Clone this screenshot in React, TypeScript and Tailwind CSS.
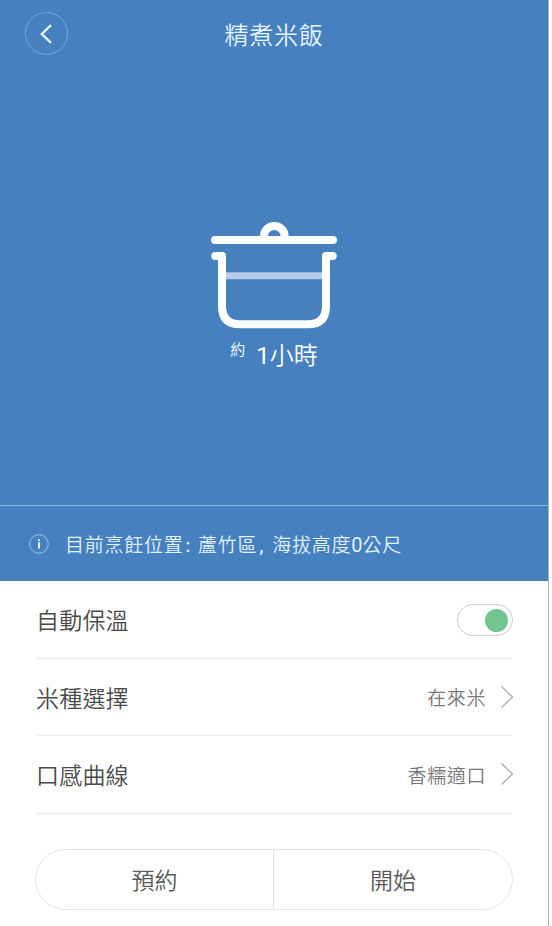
import React from "react";

function Chevron() {
  return (
    <svg className="-mr-[2px] ml-[14px] h-6 w-[14px]" viewBox="0 0 14 24" fill="none" stroke="#aaaaaa" strokeWidth="1.3">
      <path d="M1.500 1.500 L12.500 12 L1.500 22.500" />
    </svg>
  );
}

function Pot() {
  return (
    <svg className="h-[108px] w-[126px] shrink-0" viewBox="211 221 126 108" fill="none" stroke="#ffffff">
      <path d="M226 275.800H322" stroke="#b5cde9" strokeWidth="7" />
      <path d="M215 240H333" strokeWidth="8" strokeLinecap="round" />
      <path d="M264 238V236.200A10.300 10.300 0 0 1 284.600 236.200V238" strokeWidth="8" />
      <path
        d="M215.300 256H222V306Q222 324.300 240 324.300H308Q326 324.300 326 306V256H332.700"
        strokeWidth="8"
        strokeLinecap="round"
        strokeLinejoin="round"
      />
    </svg>
  );
}

function Row({ label, children }: { label: string; children: React.ReactNode }) {
  return (
    <div className="flex h-[77.5px] items-center justify-between border-b border-[#ececec] text-[#4b4b4b]">
      <span className="-ml-px pt-[6px] text-[23px] leading-8 tracking-[0.2px]">{label}</span>
      <div className="flex items-center text-[19px] tracking-[0.6px] text-[#777777]">{children}</div>
    </div>
  );
}

function Value({ text }: { text: string }) {
  return (
    <>
      <span className="pt-[5px] leading-7">{text}</span>
      <Chevron />
    </>
  );
}

export default function App() {
  return (
    <div className="h-[926px] w-[552px] overflow-hidden bg-white font-['Roboto','Noto_Sans_CJK_TC',sans-serif] font-[350]">
      <div className="flex h-full w-[549px] flex-col border-r border-[#b5b5b5] bg-white">
        <div className="flex h-[505px] flex-col bg-[#4680bf] text-white">
          <header className="grid h-[67px] grid-cols-[68px_1fr_68px] items-center">
            <button className="ml-[25px] flex h-[43px] w-[43px] items-center justify-center rounded-full border border-[#78a6da]">
              <svg className="mr-[2px] h-5 w-3" viewBox="0 0 12 20" fill="none" stroke="#e8faff" strokeWidth="2.3">
                <path d="M11 1.200 L1.800 10 L11 18.800" />
              </svg>
            </button>
            <h1 className="pt-[5px] text-center text-[24px] leading-8 font-[350] tracking-[0.8px] text-[#e6f5ff]">精煮米飯</h1>
          </header>
          <div className="flex flex-col items-center pt-[154px]">
            <Pot />
            <div className="mt-[11px] flex h-8 items-baseline leading-8">
              <span className="-translate-y-[9px] text-[15px] leading-[22px]">約</span>
              <span className="ml-[11px] font-['Roboto'] text-[24px] font-normal leading-8">1</span>
              <span className="text-[24px]">小時</span>
            </div>
          </div>
        </div>
        <div className="flex h-[76px] items-center border-t border-[#8db7e5] bg-[#4680bf] pl-[29px] text-[#e0f3ff]">
          <svg className="h-5 w-5" viewBox="0 0 20 20" fill="none">
            <circle cx="10" cy="10" r="9.3" stroke="#9fc3ea" />
            <path d="M10 8.200V14.500M10 5.200V7" stroke="#ffffff" strokeWidth="1.8" />
          </svg>
          <p className="ml-[16px] flex items-baseline pt-[4px] text-[19px] leading-7 tracking-[0.750px]">
            <span>目前烹飪位置</span>
            <span className="w-[14.500px] pl-[2px] font-medium">:</span>
            <span>蘆竹區</span>
            <span className="w-[15px] pl-[2px] font-medium">,</span>
            <span>海拔高度</span>
            <span className="text-[20px] font-normal tracking-normal">0</span>
            <span>公尺</span>
          </p>
        </div>
        <main className="pl-[37px] pr-[36px]">
          <Row label="自動保溫">
            <div className="-mr-px mt-[2px] flex h-8 w-14 items-center justify-end rounded-full border border-[#cccccc] pr-[4px]">
              <div className="h-[23px] w-[23px] rounded-full bg-[#73c48f]" />
            </div>
          </Row>
          <Row label="米種選擇">
            <Value text="在來米" />
          </Row>
          <Row label="口感曲線">
            <Value text="香糯適口" />
          </Row>
          <div className="-ml-[2px] -mr-px mt-[35px] grid h-[61px] grid-cols-2 rounded-full border border-[#e5e5e5] text-[23px] text-[#5b5b5b]">
            <button className="border-r border-[#e5e5e5] pt-[6px]">預約</button>
            <button className="pt-[6px]">開始</button>
          </div>
        </main>
      </div>
    </div>
  );
}
